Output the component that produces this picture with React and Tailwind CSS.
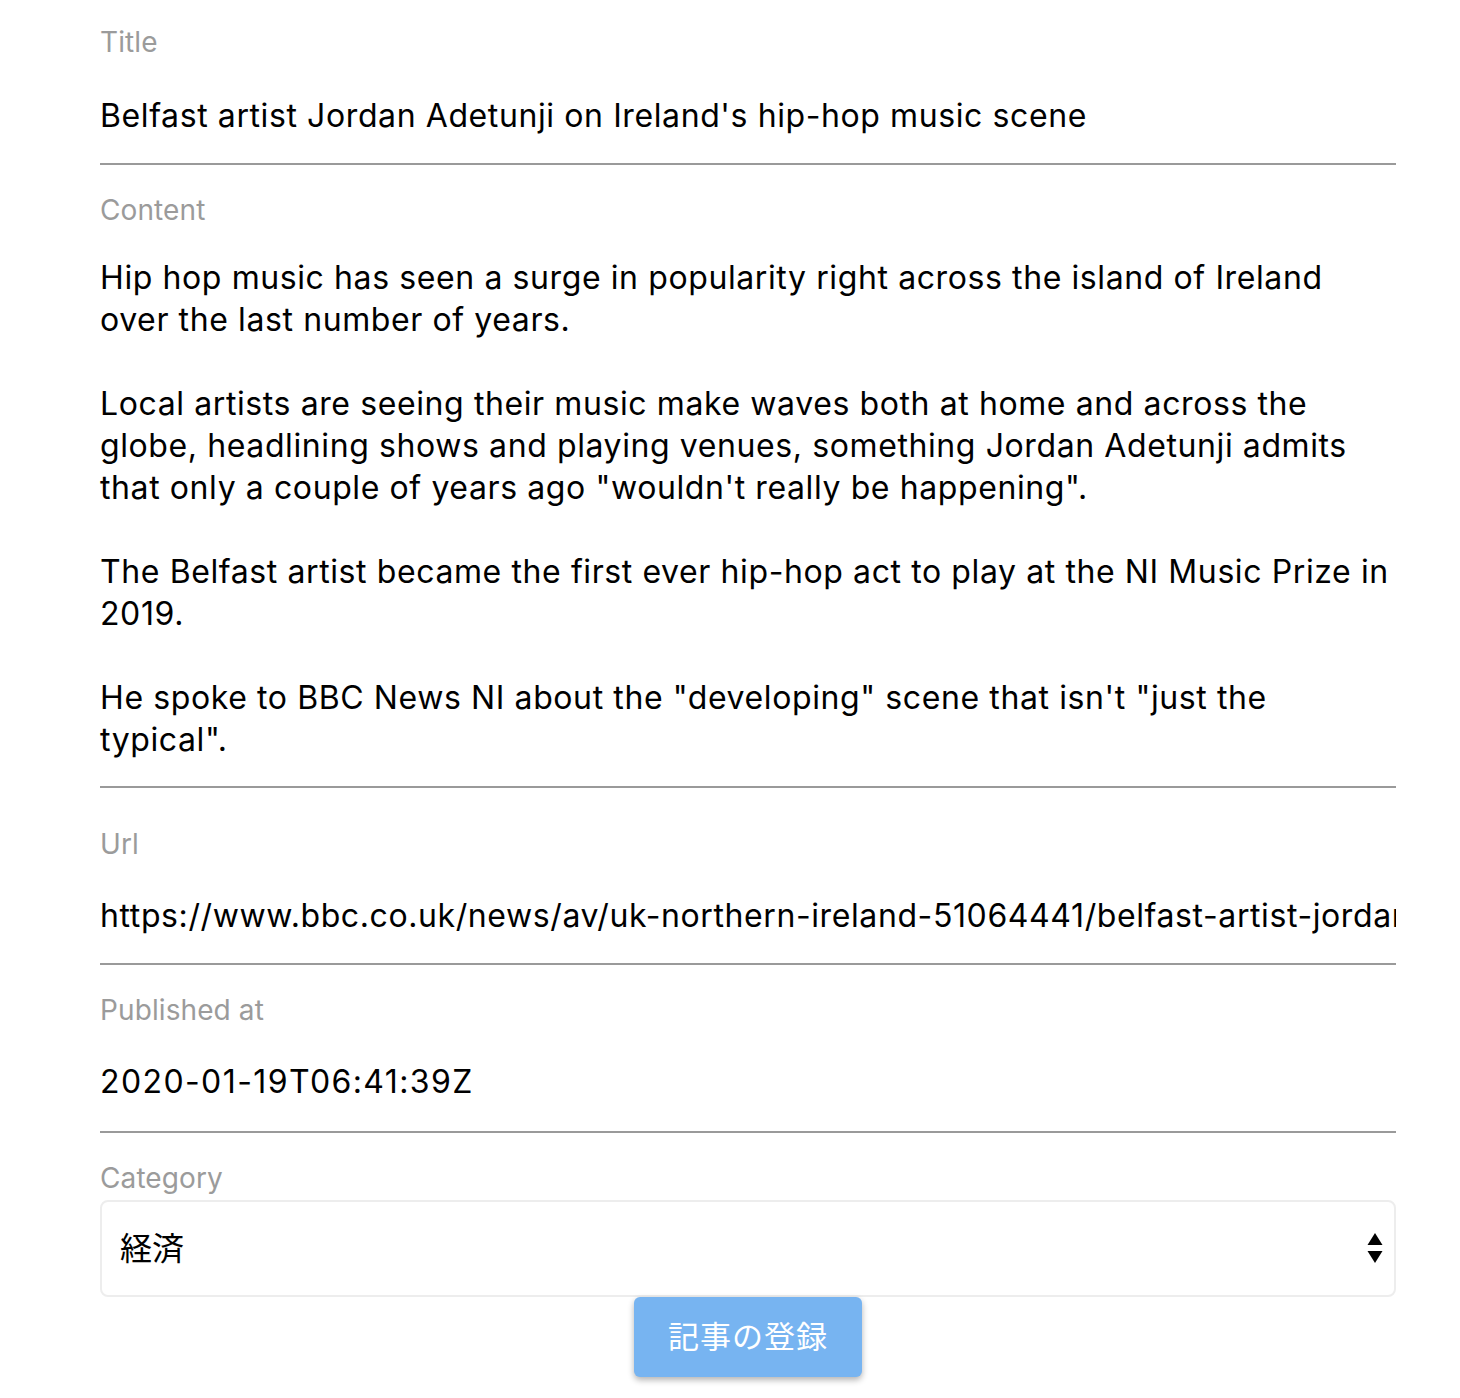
import React from "react";

const font = {
  fontFamily: 'Inter, "Noto Sans CJK JP", sans-serif',
};

const content = `Hip hop music has seen a surge in popularity right across the island of Ireland over the last number of years.

Local artists are seeing their music make waves both at home and across the globe, headlining shows and playing venues, something Jordan Adetunji admits that only a couple of years ago "wouldn't really be happening".

The Belfast artist became the first ever hip-hop act to play at the NI Music Prize in 2019.

He spoke to BBC News NI about the "developing" scene that isn't "just the typical".`;

function Label({ children, className = "" }) {
  return (
    <div className={"text-[28px] leading-[28px] tracking-[0.1px] text-[#9b9b9b] " + className}>
      {children}
    </div>
  );
}

export default function App() {
  return (
    <div className="min-h-screen bg-white" style={font}>
      <form className="ml-[100px] w-[1296px] pb-[20px]">
        {/* title */}
        <div className="pt-[28px] pb-[26px] border-b-2 border-[#9a9a9a]">
          <Label>Title</Label>
          <div className="mt-[39px] text-[32px] leading-[42px] tracking-[0.6px] text-black">
            Belfast artist Jordan Adetunji on Ireland's hip-hop music scene
          </div>
        </div>

        {/* content */}
        <div className="pt-[31px] pb-[25px] border-b-2 border-[#9a9a9a]">
          <Label>Content</Label>
          <div className="mt-[33px] text-[32px] leading-[42px] tracking-[0.6px] text-black whitespace-pre-wrap">
            {content}
          </div>
        </div>

        {/* url */}
        <div className="pt-[42px] pb-[26px] border-b-2 border-[#9a9a9a]">
          <Label>Url</Label>
          <div className="mt-[37px] text-[32px] leading-[42px] tracking-[0.6px] text-black whitespace-nowrap overflow-hidden">
            https://www.bbc.co.uk/news/av/uk-northern-ireland-51064441/belfast-artist-jordan-adetunji-on-ireland-s-hip-hop-music-scene
          </div>
        </div>

        {/* published */}
        <div className="pt-[31px] pb-[28px] border-b-2 border-[#9a9a9a]">
          <Label>Published at</Label>
          <div className="mt-[37px] text-[32px] leading-[42px] tracking-[1.4px] text-black">
            2020-01-19T06:41:39Z
          </div>
        </div>

        {/* category */}
        <div className="pt-[31px]">
          <Label>Category</Label>
          <div className="mt-[8px] h-[97px] border-2 border-[#ededed] rounded-[8px] flex items-center justify-between pl-[18px] pr-[11px]">
            <span className="text-[32px] text-black">経済</span>
            <svg width="16" height="31" viewBox="0 0 16 31">
              <polygon points="8,0 15.5,12 0.5,12" fill="#000" />
              <polygon points="0.5,18 15.5,18 8,30" fill="#000" />
            </svg>
          </div>
        </div>

        <div className="flex justify-center">
          <button
            type="button"
            className="mt-0 w-[228px] h-[80px] rounded-[6px] bg-[#77b4f1] text-white text-[31px] tracking-[1px] shadow-[0_3px_6px_rgba(0,0,0,0.3)]"
          >
            記事の登録
          </button>
        </div>
      </form>
    </div>
  );
}
